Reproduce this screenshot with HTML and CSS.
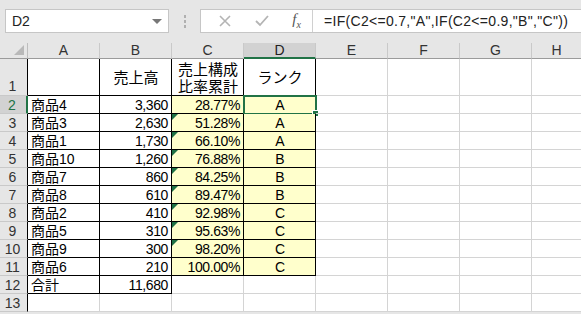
FILE: index.html
```html
<!DOCTYPE html>
<html>
<head>
  <title>ABC分析</title>
  <link rel="stylesheet" href="styles.css">
</head>
<body>
  <div class="toolbar">
    <div class="namebox">
      <span>D2</span>
      <span class="caret"></span>
    </div>
    <div class="grip"><i></i><i></i><i></i></div>
    <div class="fbar">
      <div class="ficons">
        <svg width="14" height="14" viewBox="0 0 14 14"><path d="M2 2 L12 12 M12 2 L2 12" stroke="#b4b4b4" stroke-width="1.6" fill="none"/></svg>
        <svg width="16" height="14" viewBox="0 0 16 14"><path d="M2 7 L6 11 L14 2" stroke="#b4b4b4" stroke-width="1.8" fill="none"/></svg>
        <span class="fx">f<sub>x</sub></span>
      </div>
      <div class="formula">=IF(C2&lt;=0.7,"A",IF(C2&lt;=0.9,"B","C"))</div>
    </div>
  </div>

  <div class="sheet">
    <!-- column headers -->
    <div class="corner"><span class="tri"></span></div>
    <div class="colh">A</div>
    <div class="colh">B</div>
    <div class="colh">C</div>
    <div class="colh active">D</div>
    <div class="colh">E</div>
    <div class="colh">F</div>
    <div class="colh">G</div>
    <div class="colh last">H</div>

    <!-- row 1 -->
    <div class="rowh tall">1</div>
    <div class="c t"></div>
    <div class="c t mid">売上高</div>
    <div class="c t mid two">売上構成<br>比率累計</div>
    <div class="c t mid">ランク</div>
    <div class="c"></div><div class="c"></div><div class="c"></div><div class="c last"></div>

    <!-- row 2 -->
    <div class="rowh active">2</div>
    <div class="c t">商品4</div>
    <div class="c t num">3,360</div>
    <div class="c t num y">28.77%</div>
    <div class="c t ctr y sel">A</div>
    <div class="c"></div><div class="c"></div><div class="c"></div><div class="c last"></div>

    <div class="rowh">3</div>
    <div class="c t">商品3</div>
    <div class="c t num">2,630</div>
    <div class="c t num y flag">51.28%</div>
    <div class="c t ctr y">A</div>
    <div class="c"></div><div class="c"></div><div class="c"></div><div class="c last"></div>

    <div class="rowh">4</div>
    <div class="c t">商品1</div>
    <div class="c t num">1,730</div>
    <div class="c t num y flag">66.10%</div>
    <div class="c t ctr y">A</div>
    <div class="c"></div><div class="c"></div><div class="c"></div><div class="c last"></div>

    <div class="rowh">5</div>
    <div class="c t">商品10</div>
    <div class="c t num">1,260</div>
    <div class="c t num y flag">76.88%</div>
    <div class="c t ctr y">B</div>
    <div class="c"></div><div class="c"></div><div class="c"></div><div class="c last"></div>

    <div class="rowh">6</div>
    <div class="c t">商品7</div>
    <div class="c t num">860</div>
    <div class="c t num y flag">84.25%</div>
    <div class="c t ctr y">B</div>
    <div class="c"></div><div class="c"></div><div class="c"></div><div class="c last"></div>

    <div class="rowh">7</div>
    <div class="c t">商品8</div>
    <div class="c t num">610</div>
    <div class="c t num y flag">89.47%</div>
    <div class="c t ctr y">B</div>
    <div class="c"></div><div class="c"></div><div class="c"></div><div class="c last"></div>

    <div class="rowh">8</div>
    <div class="c t">商品2</div>
    <div class="c t num">410</div>
    <div class="c t num y flag">92.98%</div>
    <div class="c t ctr y">C</div>
    <div class="c"></div><div class="c"></div><div class="c"></div><div class="c last"></div>

    <div class="rowh">9</div>
    <div class="c t">商品5</div>
    <div class="c t num">310</div>
    <div class="c t num y flag">95.63%</div>
    <div class="c t ctr y">C</div>
    <div class="c"></div><div class="c"></div><div class="c"></div><div class="c last"></div>

    <div class="rowh">10</div>
    <div class="c t">商品9</div>
    <div class="c t num">300</div>
    <div class="c t num y flag">98.20%</div>
    <div class="c t ctr y">C</div>
    <div class="c"></div><div class="c"></div><div class="c"></div><div class="c last"></div>

    <div class="rowh">11</div>
    <div class="c t">商品6</div>
    <div class="c t num">210</div>
    <div class="c t num y">100.00%</div>
    <div class="c t ctr y">C</div>
    <div class="c"></div><div class="c"></div><div class="c"></div><div class="c last"></div>

    <div class="rowh">12</div>
    <div class="c t">合計</div>
    <div class="c t num">11,680</div>
    <div class="c"></div>
    <div class="c"></div>
    <div class="c"></div><div class="c"></div><div class="c"></div><div class="c last"></div>

    <div class="rowh">13</div>
    <div class="c"></div><div class="c"></div><div class="c"></div><div class="c"></div>
    <div class="c"></div><div class="c"></div><div class="c"></div><div class="c last"></div>
  </div>
</body>
</html>
```

FILE: styles.css
```css
body {
    margin: 0;
    background-color: #e6e6e6;
    font-family: "Liberation Sans", "Noto Sans CJK JP", sans-serif;
    overflow: hidden;
}
.toolbar {
    height: 43px;
    display: flex;
    align-items: flex-start;
    padding-top: 9px;
    box-sizing: border-box;
}
.namebox {
    margin-left: 5px;
    width: 164px;
    height: 24px;
    background-color: #fff;
    border: 1px solid #c6c6c6;
    box-sizing: border-box;
    display: flex;
    align-items: center;
    justify-content: space-between;
    padding: 0 6px 0 6px;
    font-size: 14px;
    color: #222;
}
.caret {
    width: 0;
    height: 0;
    border-left: 5px solid transparent;
    border-right: 5px solid transparent;
    border-top: 5px solid #777;
}
.grip {
    width: 31px;
    height: 24px;
    display: flex;
    flex-direction: column;
    align-items: center;
    justify-content: center;
    gap: 2px;
}
.grip i {
    width: 2px;
    height: 3px;
    background-color: #b0b0b0;
}
.fbar {
    flex: 1;
    height: 24px;
    display: flex;
    background-color: #fff;
    border: 1px solid #c6c6c6;
    border-right: none;
    box-sizing: border-box;
}
.ficons {
    width: 112px;
    display: flex;
    align-items: center;
    justify-content: space-around;
    padding-left: 6px;
    box-sizing: border-box;
    border-right: 1px solid #d0d0d0;
}
.fx {
    font-family: "Liberation Serif", serif;
    font-style: italic;
    font-size: 15px;
    color: #555;
    line-height: 1;
}
.fx sub {
    font-size: 10px;
}
.formula {
    padding-left: 11px;
    font-size: 14px;
    line-height: 22px;
    white-space: nowrap;
    color: #222;
    letter-spacing: 0.3px;
}
.sheet {
    display: grid;
    grid-template-columns: 28px repeat(7, 72px) 1fr;
    grid-template-rows: 16px 37px repeat(12, 18px);
    background-color: #fff;
}
.corner, .colh, .rowh {
    background-color: #e6e6e6;
    box-sizing: border-box;
    font-size: 14px;
    color: #333;
}
.corner {
    border-right: 1px solid #bdbdbd;
    border-bottom: 1px solid #9b9b9b;
    position: relative;
}
.tri {
    position: absolute;
    right: 3px;
    bottom: 3px;
    width: 0;
    height: 0;
    border-left: 10px solid transparent;
    border-bottom: 10px solid #b9b9b9;
}
.colh {
    text-align: center;
    line-height: 15px;
    border-right: 1px solid #c9c9c9;
    border-bottom: 1px solid #9b9b9b;
}
.colh.last {
    border-right: none;
}
.colh.active {
    background-color: #d2d2d2;
    border-bottom: 2px solid #217346;
    color: #222;
}
.rowh {
    text-align: center;
    line-height: 18px;
    padding-right: 2px;
    border-right: 1px solid #000;
    border-bottom: 1px solid #c9c9c9;
}
.rowh.tall {
    display: flex;
    align-items: flex-end;
    justify-content: center;
    line-height: 17px;
}
.rowh.active {
    background-color: #d2d2d2;
    border-right: 2px solid #217346;
    color: #217346;
}
.c {
    box-sizing: border-box;
    border-right: 1px solid #d4d4d4;
    border-bottom: 1px solid #d4d4d4;
    font-size: 14px;
    line-height: 17px;
    padding: 1px 2px 0 3px;
    white-space: nowrap;
    color: #000;
    position: relative;
}
.c.last {
    border-right: none;
}
.c.t {
    border-right-color: #000;
    border-bottom-color: #000;
}
.c.num {
    text-align: right;
    letter-spacing: -0.4px;
    padding-right: 3px;
}
.c.ctr {
    text-align: center;
}
.c.mid {
    display: flex;
    align-items: center;
    justify-content: center;
    text-align: center;
    line-height: 18px;
    font-size: 15px;
    padding-top: 2px;
}
.c.two {
    line-height: 17px;
}
.c.y {
    background-color: #ffffcc;
}
.c.flag::before {
    content: "";
    position: absolute;
    left: 0;
    top: 0;
    border-top: 6px solid #1e7145;
    border-right: 6px solid transparent;
}
.c.sel {
    outline: 2px solid #217346;
    outline-offset: -1px;
}
.c.sel::after {
    content: "";
    position: absolute;
    right: -4px;
    bottom: -4px;
    width: 5px;
    height: 5px;
    background-color: #217346;
    border: 1px solid #fff;
}
```
